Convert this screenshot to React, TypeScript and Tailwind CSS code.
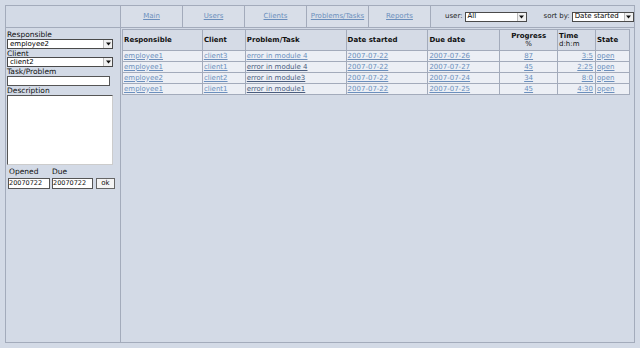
import React from "react";

const font = { fontFamily: '"DejaVu Sans", Verdana, sans-serif' };

function Sel({ value, w }: { value: string; w: string }) {
  return (
    <div className={`flex h-[10px] items-center border border-[#4a4a4a] bg-white ${w}`}>
      <span className="flex-1 truncate pl-[2px] text-[7px] leading-none text-black">{value}</span>
      <span className="flex h-full w-[9px] items-center justify-center border-l border-[#bbb] bg-[#f0f0f0]">
        <svg width="5" height="4" viewBox="0 0 5 4">
          <path d="M0 0.5 H5 L2.5 3.5 Z" fill="#111" />
        </svg>
      </span>
    </div>
  );
}

const rows = [
  { r: "employee1", c: "client3", p: "error in module 4", ds: "2007-07-22", dd: "2007-07-26", pr: "87", t: "3:5", dark: false },
  { r: "employee1", c: "client1", p: "error in module 4", ds: "2007-07-22", dd: "2007-07-27", pr: "45", t: "2:25", dark: true },
  { r: "employee2", c: "client2", p: "error in module3", ds: "2007-07-22", dd: "2007-07-24", pr: "34", t: "8:0", dark: true },
  { r: "employee1", c: "client1", p: "error in module1", ds: "2007-07-22", dd: "2007-07-25", pr: "45", t: "4:30", dark: true },
];

const link = "text-[#6b8fbd] underline";

export default function App() {
  return (
    <div className="h-[348px] w-[640px] bg-[#d3dae6] pl-[5px] pt-[5px]" style={font}>
      <div className="flex h-[338px] w-[630px] flex-col border border-[#a3abbb]">
        {/* top bar */}
        <div className="flex h-[22px] border-b border-[#a3abbb]">
          <div className="w-[115px] border-r border-[#a3abbb]" />
          {["Main", "Users", "Clients", "Problems/Tasks", "Reports"].map((t) => (
            <div
              key={t}
              className="flex w-[62px] items-center justify-center border-r border-[#a3abbb] bg-[#d8dee8] text-[7px] text-[#6b8fbd] underline"
            >
              {t}
            </div>
          ))}
          <div className="flex flex-1 items-center pl-[14px] text-[7px] text-[#222]">
            <span className="mr-[2px]">user:</span>
            <Sel value="All" w="w-[62px]" />
            <span className="ml-[17px] mr-[2px]">sort by:</span>
            <Sel value="Date started" w="w-[62px]" />
          </div>
        </div>
        {/* body */}
        <div className="flex flex-1">
          <div className="w-[115px] border-r border-[#a3abbb] pl-[1px] pt-[2px] text-[7.5px] text-[#111]">
            <div className="h-[9px] leading-[9px]">Responsible</div>
            <Sel value="employee2" w="w-[106px]" />
            <div className="h-[8px] leading-[9px]">Client</div>
            <Sel value="client2" w="w-[106px]" />
            <div className="h-[9px] leading-[9px]">Task/Problem</div>
            <div className="h-[10px] w-[103px] border border-[#555] bg-white" />
            <div className="h-[9px] leading-[10px]">Description</div>
            <div className="h-[70px] w-[106px] border border-[#555] border-b-[#ccc] border-r-[#ccc] bg-white" />
            <div className="mt-[2px] flex h-[10px] items-center pl-[2px]">
              <span className="w-[43px]">Opened</span>
              <span>Due</span>
            </div>
            <div className="ml-[1px] mt-[1px] flex items-center">
              <div className="flex h-[11px] w-[42px] items-center border border-[#555] bg-white text-[6.5px] leading-none">
                20070722
              </div>
              <div className="ml-[2px] flex h-[11px] w-[41px] items-center border border-[#555] bg-white text-[6.5px] leading-none">
                20070722
              </div>
              <div className="ml-[3px] flex h-[11px] w-[19px] items-center justify-center border border-[#666] bg-[#f4f4f4] text-[7px] leading-none">
                ok
              </div>
            </div>
          </div>
          <div className="flex-1 pl-[1px] pt-[1px]">
            <table className="border-collapse text-[7px] text-[#111]" style={{ width: 508 }}>
              <colgroup>
                <col style={{ width: 80 }} />
                <col style={{ width: 43 }} />
                <col style={{ width: 101 }} />
                <col style={{ width: 82 }} />
                <col style={{ width: 72 }} />
                <col style={{ width: 58 }} />
                <col style={{ width: 38 }} />
                <col style={{ width: 34 }} />
              </colgroup>
              <thead>
                <tr className="h-[21px] bg-[#d5dbe6]">
                  {["Responsible", "Client", "Problem/Task", "Date started", "Due date"].map((h) => (
                    <th key={h} className="border border-[#a3abbb] px-[1px] text-left font-bold leading-none">
                      {h}
                    </th>
                  ))}
                  <th className="border border-[#a3abbb] px-[1px] text-center font-bold leading-[8px]">
                    Progress
                    <br />
                    <span className="font-normal">%</span>
                  </th>
                  <th className="border border-[#a3abbb] px-[1px] text-left font-bold leading-[8px]">
                    Time
                    <br />
                    <span className="font-normal">d:h:m</span>
                  </th>
                  <th className="border border-[#a3abbb] px-[1px] text-left font-bold leading-none">State</th>
                </tr>
              </thead>
              <tbody>
                {rows.map((r, i) => (
                  <tr key={i} className="h-[11px] bg-[#eceff5] leading-none">
                    <td className="border border-[#a3abbb] px-[1px]"><span className={link}>{r.r}</span></td>
                    <td className="border border-[#a3abbb] px-[1px]"><span className={link}>{r.c}</span></td>
                    <td className="border border-[#a3abbb] px-[1px]">
                      <span className={r.dark ? "text-[#4a5d7e] underline" : link}>{r.p}</span>
                    </td>
                    <td className="border border-[#a3abbb] px-[1px]"><span className={link}>{r.ds}</span></td>
                    <td className="border border-[#a3abbb] px-[1px]"><span className={link}>{r.dd}</span></td>
                    <td className="border border-[#a3abbb] px-[1px] text-center"><span className={link}>{r.pr}</span></td>
                    <td className="border border-[#a3abbb] px-[2px] text-right"><span className={link}>{r.t}</span></td>
                    <td className="border border-[#a3abbb] px-[1px]"><span className={link}>open</span></td>
                  </tr>
                ))}
              </tbody>
            </table>
          </div>
        </div>
      </div>
    </div>
  );
}
